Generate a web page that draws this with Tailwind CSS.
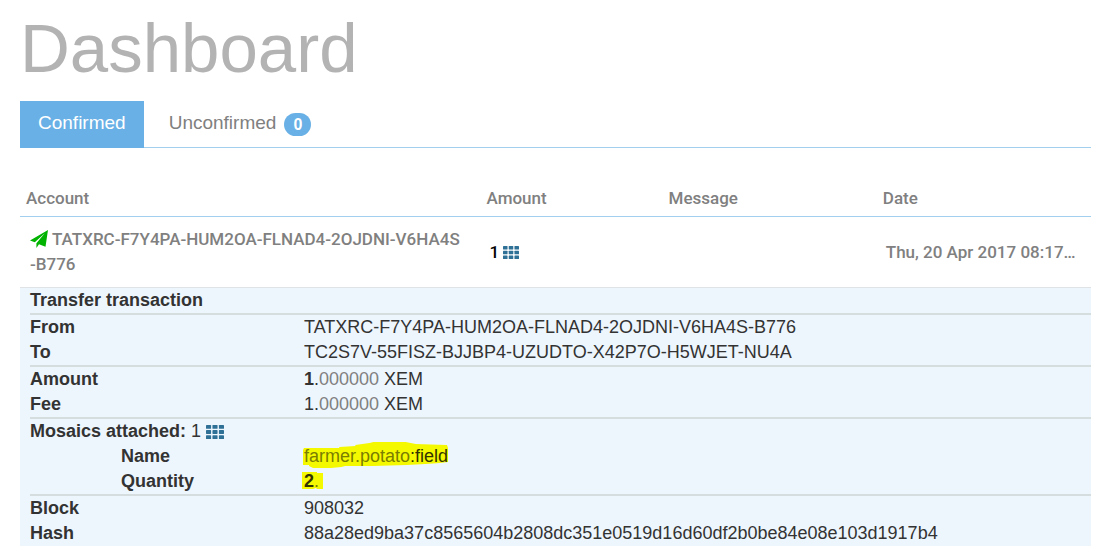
<!DOCTYPE html>
<html lang="en">
<head>
<meta charset="utf-8">
<title>Dashboard</title>
<script src="https://cdn.jsdelivr.net/npm/@tailwindcss/browser@4"></script>
</head>
<body class="bg-white font-['Liberation_Sans',Arial,sans-serif] text-[#333]">
<svg class="hidden" aria-hidden="true">
  <symbol id="grid" viewBox="0 0 18 14" preserveAspectRatio="none">
    <g fill="#2f7096"><rect width="5.100" height="3.800" rx=".6"/><rect x="6.450" width="5.100" height="3.800" rx=".6"/><rect x="12.900" width="5.100" height="3.800" rx=".6"/><rect y="5.100" width="5.100" height="3.800" rx=".6"/><rect x="6.450" y="5.100" width="5.100" height="3.800" rx=".6"/><rect x="12.900" y="5.100" width="5.100" height="3.800" rx=".6"/><rect y="10.200" width="5.100" height="3.800" rx=".6"/><rect x="6.450" y="10.200" width="5.100" height="3.800" rx=".6"/><rect x="12.900" y="10.200" width="5.100" height="3.800" rx=".6"/></g>
  </symbol>
</svg>
<main class="pt-[10px] pr-[13px] pl-5">
  <h1 class="mb-[14px] text-[69px] leading-[77px] text-[#b3b3b3]">Dashboard</h1>
  <div role="tablist" class="flex h-[47px] border-b border-[#a3cfee] text-[19px] leading-6">
    <button type="button" role="tab" aria-selected="true" class="-mb-px bg-[#68b0e5] px-[18px] pb-1 text-white">Confirmed</button>
    <button type="button" role="tab" aria-selected="false" class="flex items-center gap-2 px-[25px] pb-[2px] text-[#808080]">Unconfirmed <span class="mt-[2px] rounded-full bg-[#68b0e5] px-[9px] text-base leading-[23px] font-bold text-white">0</span></button>
  </div>
  <table class="mt-8 w-full table-fixed border-collapse">
    <colgroup><col class="w-[43%]"><col class="w-[17%]"><col class="w-[20%]"><col class="w-[20%]"></colgroup>
    <thead class="font-[Roboto,sans-serif] text-[17px] leading-6 text-[#808080]">
      <tr class="border-b border-[#a3cfee] text-left">
        <th scope="col" class="px-[6px] py-[6px] font-medium">Account</th>
        <th scope="col" class="px-[6px] font-medium">Amount</th>
        <th scope="col" class="px-[6px] font-medium">Message</th>
        <th scope="col" class="px-[6px] font-medium">Date</th>
      </tr>
    </thead>
    <tbody>
      <tr class="font-[Roboto,sans-serif] text-[17px] leading-[25px] font-medium text-[#808080]">
        <td class="p-[10px]"><svg class="mr-1 inline-block size-[18px] align-[-3px]" viewBox="0 0 18 18" aria-hidden="true"><path fill="#00b300" d="M18 0 0 10.500 4.800 12.200 14.800 3.300 6.400 13.200V18L9 14.300 15.500 16.700Z"/></svg>TATXRC-F7Y4PA-HUM2OA-FLNAD4-2OJDNI-V6HA4S<br>-B776</td>
        <td class="px-[9px] text-black">1 <svg class="inline-block h-[13px] w-4 align-[-1px]" aria-hidden="true"><use href="#grid"/></svg></td>
        <td class="px-[9px]"></td>
        <td class="truncate px-[9px]">Thu, 20 Apr 2017 08:17…</td>
      </tr>
      <tr class="border-t border-[#dfe3e6] bg-[#eef6fd]">
        <td colspan="4" class="pl-[10px]">
          <table class="w-full table-fixed border-collapse text-left text-[18px] leading-[25px]">
            <colgroup><col class="w-[274px]"><col></colgroup>
            <tbody><tr><th scope="colgroup" colspan="2">Transfer transaction</th></tr></tbody>
            <tbody class="border-t-2 border-[#d6dddf]">
              <tr><th scope="row">From</th><td>TATXRC-F7Y4PA-HUM2OA-FLNAD4-2OJDNI-V6HA4S-B776</td></tr>
              <tr><th scope="row">To</th><td>TC2S7V-55FISZ-BJJBP4-UZUDTO-X42P7O-H5WJET-NU4A</td></tr>
            </tbody>
            <tbody class="border-t-2 border-[#d6dddf]">
              <tr><th scope="row">Amount</th><td><b>1</b>.<span class="text-[#808080]">000000</span> XEM</td></tr>
              <tr><th scope="row">Fee</th><td>1.<span class="text-[#808080]">000000</span> XEM</td></tr>
            </tbody>
            <tbody class="border-t-2 border-[#d6dddf]">
              <tr><th scope="rowgroup" colspan="2">Mosaics attached: <span class="font-normal">1</span> <svg class="inline-block h-[14px] w-[18px]" aria-hidden="true"><use href="#grid"/></svg></th></tr>
              <tr><th scope="row" class="pl-[91px]">Name</th><td><span class="relative isolate text-[#333300]"><svg class="absolute -top-1 -left-px -z-10 h-[26px] w-[146px]" viewBox="0 0 145 26" preserveAspectRatio="none" aria-hidden="true"><path fill="#f4f900" d="M1 6H36V5L52 4V3L66 1 70 0H102L112 2 143 3 144 6V20L136 21 122 22 103 23 70 24H42L38 25 28 26H10L6 24V23H0V8Z"/></svg><span class="text-[#7a7d00]">farmer.potato</span>:field</span></td></tr>
              <tr><th scope="row" class="pl-[91px]">Quantity</th><td><span class="relative isolate text-[#333300]"><svg class="absolute top-px -left-[2px] -z-10 h-[17px] w-[21px]" viewBox="0 0 21 17" aria-hidden="true"><path fill="#f4f900" d="M0 0H15V1H21V17H15L14 16 11 17H0Z"/></svg><b>2</b><span class="text-[#7a7d00]">.</span></span></td></tr>
            </tbody>
            <tbody class="border-t-2 border-[#d6dddf]">
              <tr><th scope="row">Block</th><td>908032</td></tr>
              <tr><th scope="row">Hash</th><td>88a28ed9ba37c8565604b2808dc351e0519d16d60df2b0be84e08e103d1917b4</td></tr>
            </tbody>
          </table>
        </td>
      </tr>
    </tbody>
  </table>
</main>
</body>
</html>
